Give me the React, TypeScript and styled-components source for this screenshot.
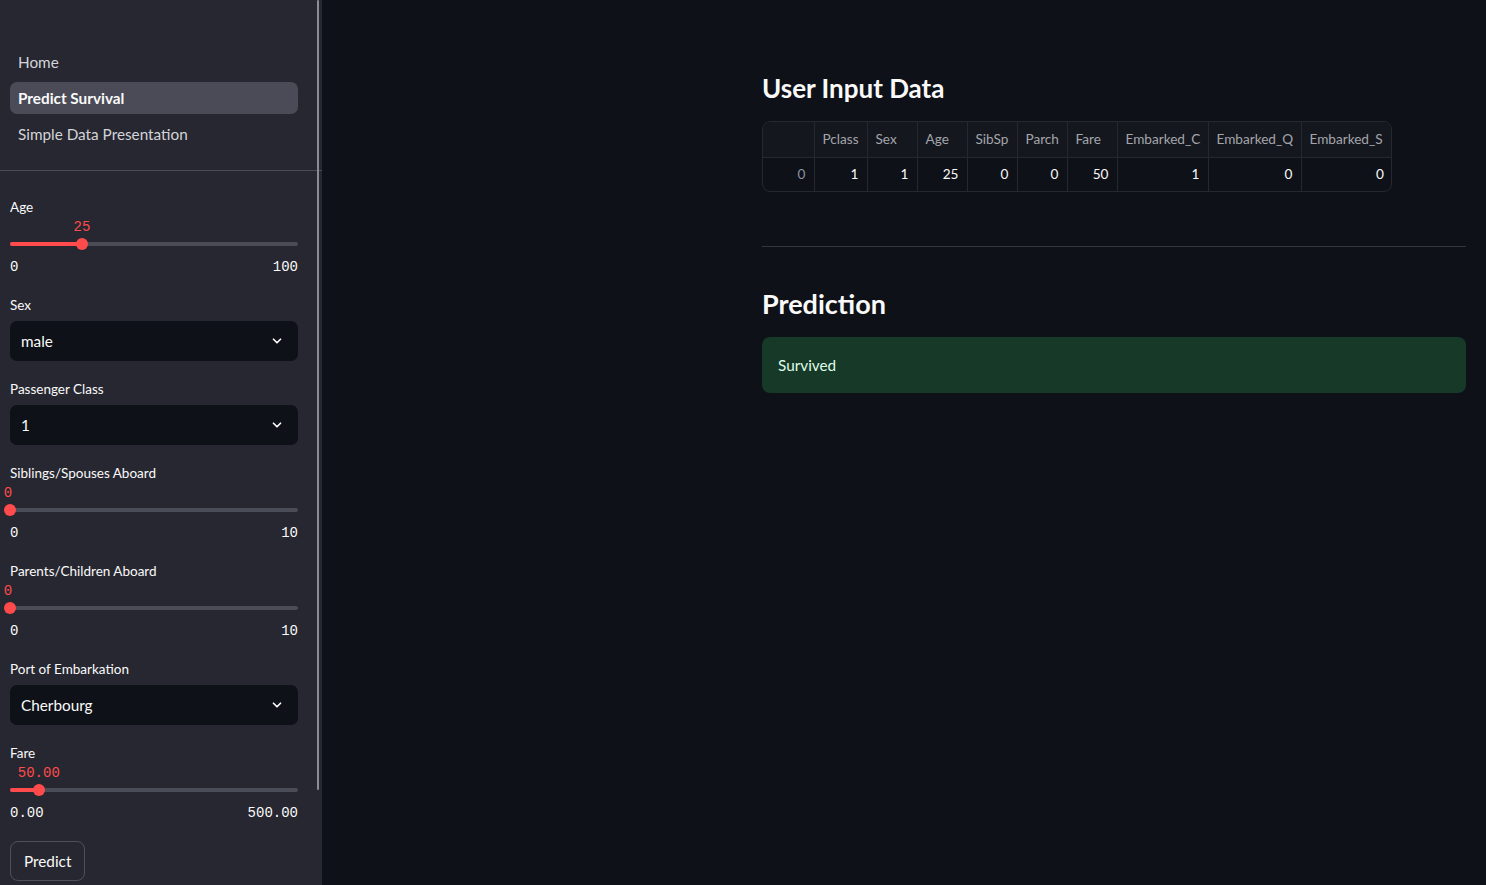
import React from "react";
import styled, { createGlobalStyle } from "styled-components";

const SANS = `"Lato", "Open Sans", sans-serif`;
const MONO = `"Liberation Mono", "DejaVu Sans Mono", monospace`;

const Global = createGlobalStyle`
  html, body { margin: 0; padding: 0; background: #0e1117; }
  body { font-family: ${SANS}; color: #fafafa; }
  * { box-sizing: border-box; }
`;

const Page = styled.div`
  display: flex;
  width: 100%;
  height: 885px;
  overflow: hidden;
  background: #0e1117;
`;

const Sidebar = styled.aside`
  position: relative;
  width: 322px;
  flex: 0 0 322px;
  background: #262730;
  display: flex;
  flex-direction: column;
`;

const Scrollbar = styled.div`
  position: absolute;
  left: 317px;
  top: 0;
  width: 2px;
  height: 790px;
  background: #8b8c93;
  border-radius: 1px;
`;

const Nav = styled.nav`
  display: flex;
  flex-direction: column;
  gap: 4px;
  padding: 46px 24px 0 10px;
`;

const NavItem = styled.div<{ $active?: boolean }>`
  height: 32px;
  display: flex;
  align-items: center;
  padding: 0 8px;
  border-radius: 7px;
  font-size: 15.3px;
  font-weight: ${(p) => (p.$active ? 700 : 400)};
  color: ${(p) => (p.$active ? "#fafafa" : "#d4d4d9")};
  background: ${(p) => (p.$active ? "#4a4b57" : "transparent")};
`;

const Divider = styled.div`
  height: 1px;
  background: #4a4b54;
  margin-top: 20px;
`;

const Controls = styled.div`
  display: flex;
  flex-direction: column;
  gap: 18px;
  padding: 26px 24px 0 10px;
`;

const Widget = styled.div`
  display: flex;
  flex-direction: column;
`;

const Label = styled.div`
  height: 20px;
  line-height: 20px;
  font-size: 13.5px;
  color: #fafafa;
`;

const ValueRow = styled.div`
  position: relative;
  height: 21px;
`;

const ValueText = styled.span`
  position: absolute;
  top: 0;
  transform: translateX(-50%);
  font-family: ${MONO};
  font-size: 14px;
  line-height: 20px;
  color: #ff4b4b;
  white-space: nowrap;
`;

const TrackArea = styled.div`
  position: relative;
  height: 12px;
  display: flex;
  align-items: center;
`;

const Track = styled.div`
  width: 100%;
  height: 4px;
  border-radius: 2px;
  background: #4a4c57;
  overflow: hidden;
`;

const Fill = styled.div`
  height: 100%;
  background: #ff4b4b;
`;

const Thumb = styled.div`
  position: absolute;
  top: 0;
  width: 12px;
  height: 12px;
  margin-left: -6px;
  border-radius: 50%;
  background: #ff4b4b;
`;

const MinMax = styled.div`
  display: flex;
  justify-content: space-between;
  margin-top: 7px;
  height: 20px;
  line-height: 20px;
  font-family: ${MONO};
  font-size: 14px;
  color: #fafafa;
`;

const SelectBox = styled.div`
  margin-top: 6px;
  height: 40px;
  border-radius: 7px;
  background: #0e1117;
  display: flex;
  align-items: center;
  justify-content: space-between;
  padding: 0 14px 0 11px;
  font-size: 15.3px;
  color: #fafafa;
`;

const Button = styled.button`
  align-self: flex-start;
  height: 40px;
  padding: 0 13px;
  border-radius: 8px;
  border: 1px solid #4f5058;
  background: #262730;
  color: #fafafa;
  font-family: ${SANS};
  font-size: 15.3px;
`;

const Main = styled.main`
  flex: 1;
  display: flex;
  justify-content: flex-end;
  padding: 0 20px 0 0;
`;

const Content = styled.div`
  width: 704px;
  display: flex;
  flex-direction: column;
  padding-top: 70px;
`;

const H3 = styled.h3`
  margin: 0;
  font-size: 26px;
  line-height: 36px;
  font-weight: 700;
  color: #fafafa;
`;

const H2 = styled.h2`
  margin: 37px 0 0;
  font-size: 27px;
  line-height: 40px;
  font-weight: 700;
  color: #fafafa;
`;

const TableWrap = styled.div`
  margin-top: 15px;
  width: 630px;
  border: 1px solid #262830;
  border-radius: 8px;
  overflow: hidden;
`;

const Table = styled.table`
  border-collapse: collapse;
  table-layout: fixed;
  width: 629px;
  font-size: 13.6px;
`;

const Th = styled.th`
  height: 35px;
  padding: 0 8px;
  text-align: left;
  font-weight: 400;
  color: #a3a5ab;
  background: #15171e;
  border-left: 1px solid #262830;
  border-bottom: 1px solid #262830;
  white-space: nowrap;
  &:first-child { border-left: none; }
`;

const Td = styled.td<{ $index?: boolean }>`
  height: 34px;
  padding: 0 8px 1px;
  text-align: right;
  color: ${(p) => (p.$index ? "#8c93a3" : "#fafafa")};
  border-left: 1px solid #262830;
  &:first-child { border-left: none; }
`;

const Hr = styled.hr`
  margin: 54px 0 0;
  border: none;
  height: 1px;
  background: #34363e;
`;

const Success = styled.div`
  margin-top: 13px;
  height: 56px;
  border-radius: 8px;
  background: #173928;
  display: flex;
  align-items: center;
  padding: 0 16px;
  font-size: 15.3px;
  color: #dffde9;
`;

const Chevron = () => (
  <svg width="14" height="14" viewBox="0 0 24 24" fill="none" stroke="#fafafa" strokeWidth="3" strokeLinecap="round" strokeLinejoin="round">
    <path d="M6 9l6 6 6-6" />
  </svg>
);

type SliderProps = { label: string; value: string; pct: number; min: string; max: string };

const Slider = ({ label, value, pct, min, max }: SliderProps) => (
  <Widget>
    <Label>{label}</Label>
    <ValueRow>
      <ValueText style={{ left: `calc(${pct}% - ${pct === 0 ? 2 : 0}px)` }}>{value}</ValueText>
    </ValueRow>
    <TrackArea>
      <Track>
        <Fill style={{ width: `${pct}%` }} />
      </Track>
      <Thumb style={{ left: `${pct}%` }} />
    </TrackArea>
    <MinMax>
      <span>{min}</span>
      <span>{max}</span>
    </MinMax>
  </Widget>
);

const Select = ({ label, value }: { label: string; value: string }) => (
  <Widget>
    <Label>{label}</Label>
    <SelectBox>
      <span>{value}</span>
      <Chevron />
    </SelectBox>
  </Widget>
);

const cols = [51, 53, 50, 50, 50, 50, 50, 91, 93, 91];
const headers = ["", "Pclass", "Sex", "Age", "SibSp", "Parch", "Fare", "Embarked_C", "Embarked_Q", "Embarked_S"];
const row = ["0", "1", "1", "25", "0", "0", "50", "1", "0", "0"];

export default function App() {
  return (
    <>
      <Global />
      <Page>
        <Sidebar>
          <Nav>
            <NavItem>Home</NavItem>
            <NavItem $active>Predict Survival</NavItem>
            <NavItem>Simple Data Presentation</NavItem>
          </Nav>
          <Divider />
          <Controls>
            <Slider label="Age" value="25" pct={25} min="0" max="100" />
            <Select label="Sex" value="male" />
            <Select label="Passenger Class" value="1" />
            <Slider label="Siblings/Spouses Aboard" value="0" pct={0} min="0" max="10" />
            <Slider label="Parents/Children Aboard" value="0" pct={0} min="0" max="10" />
            <Select label="Port of Embarkation" value="Cherbourg" />
            <Slider label="Fare" value="50.00" pct={10} min="0.00" max="500.00" />
            <Button>Predict</Button>
          </Controls>
          <Scrollbar />
        </Sidebar>
        <Main>
          <Content>
            <H3>User Input Data</H3>
            <TableWrap>
              <Table>
                <colgroup>
                  {cols.map((w, i) => (
                    <col key={i} style={{ width: w }} />
                  ))}
                </colgroup>
                <thead>
                  <tr>
                    {headers.map((h, i) => (
                      <Th key={i}>{h}</Th>
                    ))}
                  </tr>
                </thead>
                <tbody>
                  <tr>
                    {row.map((v, i) => (
                      <Td key={i} $index={i === 0}>{v}</Td>
                    ))}
                  </tr>
                </tbody>
              </Table>
            </TableWrap>
            <Hr />
            <H2>Prediction</H2>
            <Success>Survived</Success>
          </Content>
        </Main>
      </Page>
    </>
  );
}
